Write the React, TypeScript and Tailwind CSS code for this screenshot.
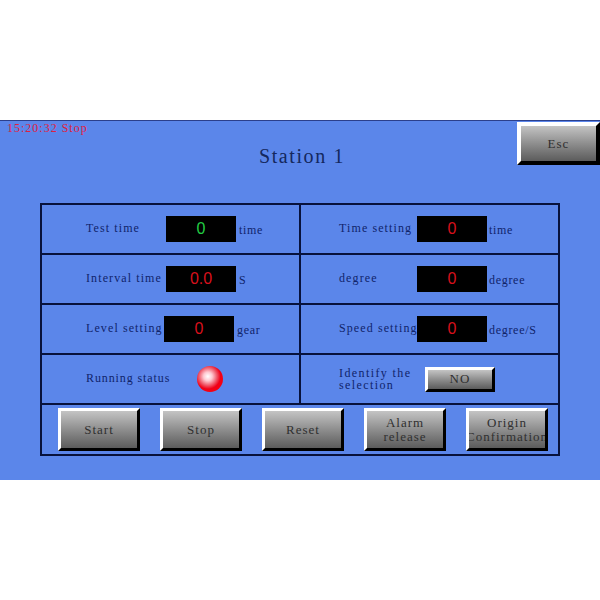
const serif = "font-['Liberation_Serif',serif]";
const lineColor = "border-[#08123c]";

function Bevel({ className, children }: { className: string; children: React.ReactNode }) {
  return (
    <button
      className={`flex items-center justify-center border-[3px] border-t-white border-l-white border-r-black border-b-black bg-gradient-to-b from-[#c4c4c4] to-[#5c5c5c] text-[#303030] text-[13px] tracking-[1px] leading-[14px] text-center whitespace-pre-line overflow-hidden ${serif} ${className}`}
    >
      {children}
    </button>
  );
}

function Readout({ value, color = "text-[#d8101c]", className = "" }: { value: string; color?: string; className?: string }) {
  return (
    <div
      className={`flex items-center justify-center w-[70px] h-[26px] bg-black text-[16px] font-['Liberation_Sans',sans-serif] ${color} ${className}`}
    >
      {value}
    </div>
  );
}

function Cell({ label, labelWidth, value, color, unit, right }: {
  label: string;
  labelWidth: string;
  value: string;
  color?: string;
  unit: string;
  right?: boolean;
}) {
  return (
    <div className={`flex items-center ${right ? "pl-[38px]" : `pl-[44px] border-r-2 ${lineColor}`}`}>
      <span className={`${labelWidth} text-[12px] tracking-[1.1px] -mt-[3px] whitespace-nowrap text-[#10246a] ${serif}`}>{label}</span>
      <Readout value={value} color={color} />
      <span className={`${right ? "ml-[2px]" : "ml-[3px]"} mt-px text-[12px] tracking-[0.7px] text-[#10246a] ${serif}`}>{unit}</span>
    </div>
  );
}

export default function App() {
  const row = `grid grid-cols-[259px_1fr] h-[50px] border-b-2 ${lineColor}`;
  return (
    <div className="w-[600px] h-[600px] bg-white pt-[120px]">
      <div className="h-[360px] bg-[#5b86ea] border-t border-[#2b3f8c]">
        <div className="h-[82px] grid grid-cols-[1fr_auto_1fr]">
          <div className={`pl-[7px] pt-px text-[12px] tracking-[1px] leading-[12px] text-[#e02040] ${serif}`}>15:20:32 Stop</div>
          <div className={`pt-[25px] pl-[4px] text-[20px] tracking-[1.6px] leading-[20px] text-[#14285e] ${serif}`}>Station 1</div>
          <div className="flex justify-end pt-px">
            <Bevel className="w-[83px] h-[43px] border-[4px]">Esc</Bevel>
          </div>
        </div>

        <div className={`ml-[40px] w-[520px] h-[253px] border-2 ${lineColor}`}>
          <div className={row}>
            <Cell label="Test time" labelWidth="w-[80px]" value="0" color="text-[#22cc44]" unit="time" />
            <Cell label="Time setting" labelWidth="w-[78px]" value="0" unit="time" right />
          </div>
          <div className={row}>
            <Cell label="Interval time" labelWidth="w-[80px]" value="0.0" unit="S" />
            <Cell label="degree" labelWidth="w-[78px]" value="0" unit="degree" right />
          </div>
          <div className={row}>
            <Cell label="Level setting" labelWidth="w-[78px]" value="0" unit="gear" />
            <Cell label="Speed setting" labelWidth="w-[78px]" value="0" unit="degree/S" right />
          </div>
          <div className={row}>
            <div className={`flex items-center pl-[44px] border-r-2 ${lineColor}`}>
              <span className={`w-[111px] -mt-[3px] text-[12px] tracking-[0.9px] text-[#10246a] ${serif}`}>Running status</span>
              <div className="w-[26px] h-[26px] rounded-full bg-[radial-gradient(circle_at_42%_40%,#ffffff_0%,#ffc8d0_20%,#f06070_40%,#f00018_58%,#ff0000_100%)]" />
            </div>
            <div className="flex items-center pl-[38px]">
              <span className={`w-[86px] text-[12px] tracking-[1.4px] leading-[12px] text-[#10246a] whitespace-pre-line ${serif}`}>{"Identify the\nselection"}</span>
              <Bevel className="w-[70px] h-[25px]">NO</Bevel>
            </div>
          </div>
          <div className="flex gap-[20px] pl-[16px] pt-[3px]">
            <Bevel className="w-[82px] h-[43px]">Start</Bevel>
            <Bevel className="w-[82px] h-[43px]">Stop</Bevel>
            <Bevel className="w-[82px] h-[43px]">Reset</Bevel>
            <Bevel className="w-[82px] h-[43px]">{"Alarm\nrelease"}</Bevel>
            <Bevel className="w-[82px] h-[43px] tracking-[0.6px]">{"Origin\nConfirmation"}</Bevel>
          </div>
        </div>
      </div>
    </div>
  );
}
